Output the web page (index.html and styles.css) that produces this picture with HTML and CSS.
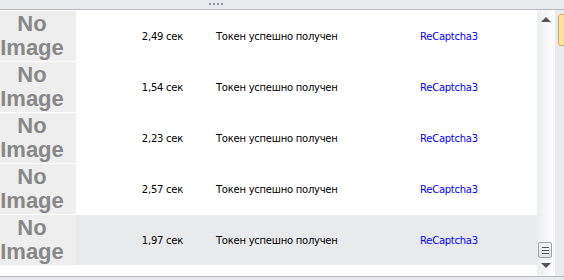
FILE: index.html
```html
<!DOCTYPE html>
<html lang="ru">
<head>
  <meta charset="UTF-8" />
  <title>Журнал капчи</title>
  <link rel="stylesheet" href="styles.css">
</head>
<body>

<div class="grip"><i></i><i></i><i></i><i></i></div>

<div class="frame">
  <div class="list">
    <div class="row">
      <div class="thumb"><span>No<br>Image</span></div>
      <div class="time">2,49 сек</div>
      <div class="msg">Токен успешно получен</div>
      <div class="kind">ReCaptcha3</div>
    </div>
    <div class="row">
      <div class="thumb"><span>No<br>Image</span></div>
      <div class="time">1,54 сек</div>
      <div class="msg">Токен успешно получен</div>
      <div class="kind">ReCaptcha3</div>
    </div>
    <div class="row">
      <div class="thumb"><span>No<br>Image</span></div>
      <div class="time">2,23 сек</div>
      <div class="msg">Токен успешно получен</div>
      <div class="kind">ReCaptcha3</div>
    </div>
    <div class="row">
      <div class="thumb"><span>No<br>Image</span></div>
      <div class="time">2,57 сек</div>
      <div class="msg">Токен успешно получен</div>
      <div class="kind">ReCaptcha3</div>
    </div>
    <div class="row selected">
      <div class="thumb"><span>No<br>Image</span></div>
      <div class="time">1,97 сек</div>
      <div class="msg">Токен успешно получен</div>
      <div class="kind">ReCaptcha3</div>
    </div>
  </div>

  <!-- вертикальная прокрутка -->
  <div class="scrollbar">
    <div class="arrow up"></div>
    <div class="handle"><b></b><b></b><b></b></div>
    <div class="arrow down"></div>
  </div>

  <div class="side">
    <div class="tab"></div>
  </div>
</div>

<div class="bottom"></div>

</body>
</html>
```

FILE: styles.css
```css
body {
  margin: 0;
  width: 564px;
  height: 280px;
  overflow: hidden;
  background: #e8eaee;
  font-family: "DejaVu Sans", Verdana, sans-serif;
  font-size: 10px;
  letter-spacing: -0.25px;
  color: #000;
}
.grip {
  height: 10px;
  display: flex;
  gap: 2px;
  padding: 3px 0 0 209px;
  box-sizing: border-box;
  border-bottom: 1px solid #b5b9c3;
}
.grip i {
  width: 2px;
  height: 2px;
  background: #8a94a3;
}
.frame {
  display: flex;
  height: 266px;
}
.list {
  width: 537px;
  flex-shrink: 0;
  background: #fff;
  display: flex;
  flex-direction: column;
  gap: 1px;
  padding-top: 1px;
}
.row {
  height: 50px;
  display: flex;
  align-items: center;
}
.row.selected {
  background: #e9eaec;
}
.thumb {
  width: 76px;
  height: 50px;
  background: #eeeeee;
}
.thumb span {
  display: block;
  width: 64px;
  text-align: center;
  font-family: "Liberation Sans", Arial, sans-serif;
  font-weight: bold;
  font-size: 22px;
  line-height: 24px;
  letter-spacing: 0;
  color: #888;
  padding-top: 1px;
}
.time {
  width: 107px;
  text-align: right;
}
.msg {
  margin-left: 33px;
  width: 204px;
}
.kind {
  color: #0000ff;
}
.scrollbar {
  width: 18px;
  flex-shrink: 0;
  position: relative;
  background: linear-gradient(to right, #eceef0, #f8f8f8 60%, #fdfdfd);
}
.arrow {
  position: absolute;
  left: 4px;
  width: 0;
  height: 0;
  border-left: 5px solid transparent;
  border-right: 5px solid transparent;
}
.arrow.up {
  top: 7px;
  border-bottom: 5px solid #555;
}
.arrow.down {
  top: 253px;
  border-top: 5px solid #555;
}
.handle {
  position: absolute;
  left: 1px;
  top: 232px;
  width: 12px;
  height: 14px;
  border: 1px solid #9aa0a8;
  border-radius: 2px;
  background: linear-gradient(#f4f4f4, #e2e2e2);
  display: flex;
  flex-direction: column;
  justify-content: center;
  align-items: center;
  gap: 2px;
}
.handle b {
  width: 7px;
  height: 1px;
  background: #555;
}
.side {
  width: 9px;
  flex-shrink: 0;
  box-sizing: border-box;
  padding: 4px 0 0 3px;
  overflow: hidden;
}
.tab {
  width: 10px;
  height: 30px;
  border: 1px solid #e2a54a;
  border-radius: 3px;
  background: linear-gradient(to right, #fde7a8, #fbd77c);
}
.bottom {
  border-top: 1px solid #b5b9c3;
  height: 2px;
}
```
